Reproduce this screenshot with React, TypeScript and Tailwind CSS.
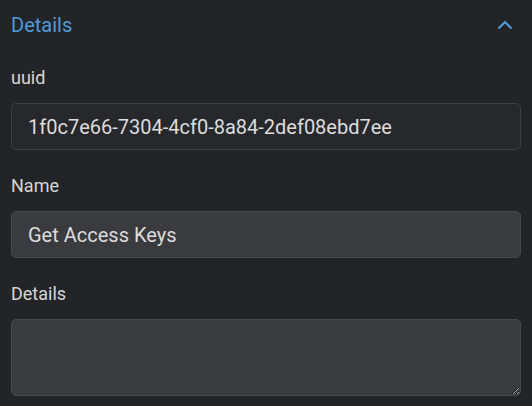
import { useState } from 'react';

const font = { fontFamily: 'Roboto, "Noto Sans", sans-serif' };

function Field({ label, value, tone }: { label: string; value: string; tone: 'dark' | 'light' }) {
  return (
    <div className="flex flex-col">
      <label className="text-[18px] leading-[24px] text-[#d6d6d7]">{label}</label>
      <input
        readOnly
        value={value}
        className={
          tone === 'dark'
            ? 'mt-[13px] h-[47px] w-full rounded-[5px] border border-[#3d3f43] bg-[#26282b] pl-4 text-[20px] text-[#dcdcdd] outline-none'
            : 'mt-[13px] h-[47px] w-full rounded-[5px] border border-[#48494d] bg-[#3a3b3f] pl-4 text-[20px] text-[#dcdcdd] outline-none'
        }
      />
    </div>
  );
}

export default function App() {
  const [open, setOpen] = useState(true);

  return (
    <div className="min-h-screen bg-[#232428] px-[11px] pt-[11px] pb-[11px]" style={font}>
      {/* Section header */}
      <div className="flex items-center justify-between">
        <h2 className="text-[20px] leading-[28px] text-[#4f9bd8]">Details</h2>
        <button
          type="button"
          onClick={() => setOpen(!open)}
          className="mr-[8px] flex h-[28px] w-[16px] items-center justify-center"
        >
          <svg width="16" height="10" viewBox="0 0 16 10" fill="none">
            <path d="M1.5 8.5 L8 2 L14.5 8.5" stroke="#4f9bd8" strokeWidth="2.2" />
          </svg>
        </button>
      </div>

      {open && (
        <div className="mt-[27px] flex flex-col gap-[24px]">
          <Field label="uuid" value="1f0c7e66-7304-4cf0-8a84-2def08ebd7ee" tone="dark" />
          <Field label="Name" value="Get Access Keys" tone="light" />
          <div className="flex flex-col">
            <label className="text-[18px] leading-[24px] text-[#d6d6d7]">Details</label>
            <textarea
              className="mt-[13px] h-[77px] w-full rounded-[5px] border border-[#48494d] bg-[#3a3b3f] px-4 py-2 text-[20px] text-[#dcdcdd] outline-none"
            />
          </div>
        </div>
      )}
    </div>
  );
}
